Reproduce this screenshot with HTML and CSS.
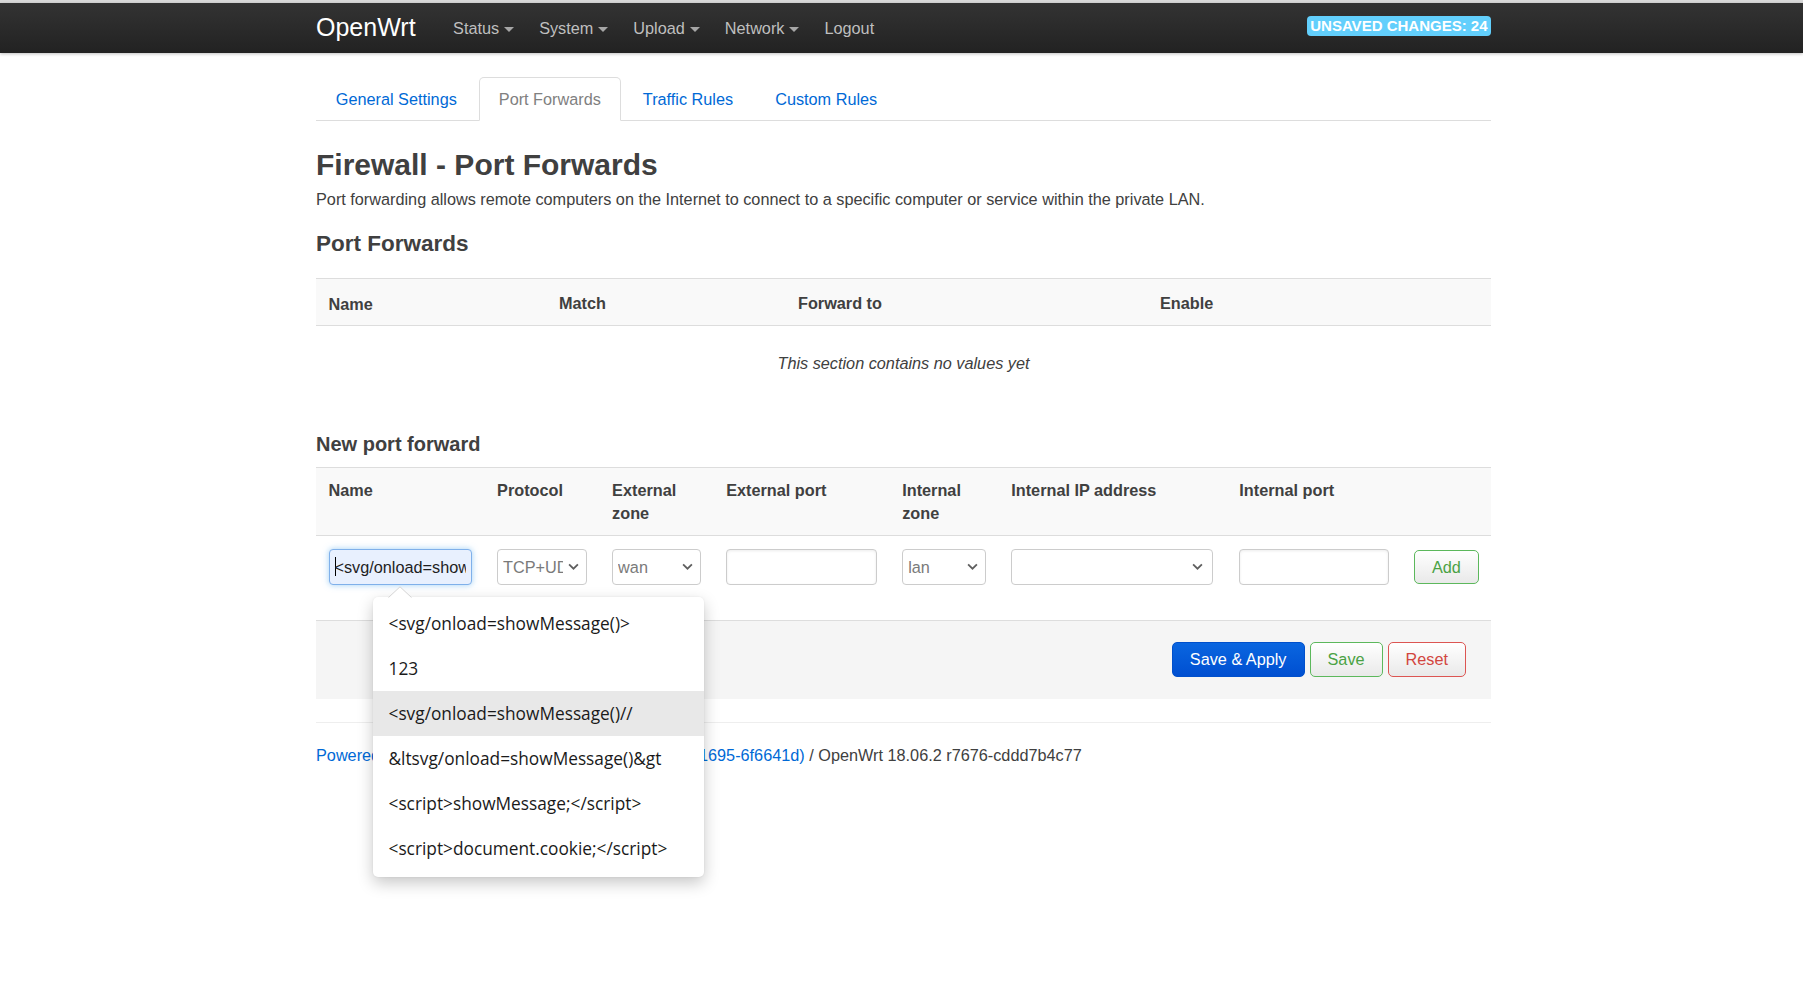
FILE: index.html
```html
<!DOCTYPE html>
<html lang="en">
<head>
<meta charset="utf-8">
<title>OpenWrt - Firewall - Port Forwards - LuCI</title>
<link rel="stylesheet" href="styles.css">
</head>
<body>
<div class="topline"></div>
<header class="topbar">
  <div class="container topbar-inner">
    <a class="brand" href="#">OpenWrt</a>
    <ul class="nav">
      <li><a href="#">Status<span class="caret"></span></a></li>
      <li><a href="#">System<span class="caret"></span></a></li>
      <li><a href="#">Upload<span class="caret"></span></a></li>
      <li><a href="#">Network<span class="caret"></span></a></li>
      <li><a href="#">Logout</a></li>
    </ul>
    <span class="badge">UNSAVED CHANGES: 24</span>
  </div>
</header>

<main class="container main">
  <ul class="tabs">
    <li><a href="#">General Settings</a></li>
    <li class="active"><a href="#">Port Forwards</a></li>
    <li><a href="#">Traffic Rules</a></li>
    <li><a href="#">Custom Rules</a></li>
  </ul>

  <h2 class="page-title">Firewall - Port Forwards</h2>
  <p class="page-desc">Port forwarding allows remote computers on the Internet to connect to a specific computer or service within the private LAN.</p>

  <h3 class="section-title">Port Forwards</h3>
  <table class="table t1">
    <colgroup>
      <col class="c1-name"><col class="c1-match"><col class="c1-fwd"><col class="c1-enable">
    </colgroup>
    <thead>
      <tr><th class="th-name">Name</th><th>Match</th><th>Forward to</th><th>Enable</th></tr>
    </thead>
    <tbody>
      <tr class="placeholder"><td colspan="4"><em>This section contains no values yet</em></td></tr>
    </tbody>
  </table>

  <h4 class="create-title">New port forward</h4>
  <table class="table t2">
    <colgroup>
      <col class="c2-name"><col class="c2-proto"><col class="c2-ezone"><col class="c2-eport"><col class="c2-izone"><col class="c2-iip"><col class="c2-iport"><col class="c2-add">
    </colgroup>
    <thead>
      <tr>
        <th>Name</th><th>Protocol</th><th>External zone</th><th>External port</th><th>Internal zone</th><th>Internal IP address</th><th>Internal port</th><th></th>
      </tr>
    </thead>
    <tbody>
      <tr class="create-row">
        <td>
          <div class="ac-anchor">
            <div class="input input-focus"><span class="text-caret"></span><span class="input-text">&lt;svg/onload=showMessage()//</span></div>
            <div class="ac-popup">
              <svg class="ac-arrow" width="24" height="12" viewBox="0 0 24 12"><path d="M0.5 11.5 L12 0.8 L23.5 11.5" fill="#fff" stroke="#d4d4d4" stroke-width="1"/></svg>
              <ul class="ac-list">
                <li>&lt;svg/onload=showMessage()&gt;</li>
                <li>123</li>
                <li class="hover">&lt;svg/onload=showMessage()//</li>
                <li>&amp;ltsvg/onload=showMessage()&amp;gt</li>
                <li>&lt;script&gt;showMessage;&lt;/script&gt;</li>
                <li>&lt;script&gt;document.cookie;&lt;/script&gt;</li>
              </ul>
            </div>
          </div>
        </td>
        <td><div class="select sel-proto"><span class="sel-text">TCP+UDP</span><svg class="chev" viewBox="0 0 10 6"><path d="M1 1 L5 5 L9 1"/></svg></div></td>
        <td><div class="select sel-wan"><span class="sel-text">wan</span><svg class="chev" viewBox="0 0 10 6"><path d="M1 1 L5 5 L9 1"/></svg></div></td>
        <td><div class="input input-eport"></div></td>
        <td><div class="select sel-lan"><span class="sel-text">lan</span><svg class="chev" viewBox="0 0 10 6"><path d="M1 1 L5 5 L9 1"/></svg></div></td>
        <td><div class="select sel-ip"><span class="sel-text"></span><svg class="chev" viewBox="0 0 10 6"><path d="M1 1 L5 5 L9 1"/></svg></div></td>
        <td><div class="input input-iport"></div></td>
        <td><button class="btn btn-add" type="button">Add</button></td>
      </tr>
    </tbody>
  </table>

  <div class="actions">
    <button class="btn btn-apply" type="button">Save &amp; Apply</button>
    <button class="btn btn-save" type="button">Save</button>
    <button class="btn btn-reset" type="button">Reset</button>
  </div>

  <footer class="footer">
    <a href="#">Powered by LuCI openwrt-18.06 branch (git-19.020.41695-6f6641d)</a> / OpenWrt 18.06.2 r7676-cddd7b4c77
  </footer>
</main>
</body>
</html>
```

FILE: styles.css
```css
* { box-sizing: border-box; }

html, body {
  margin: 0;
  padding: 0;
}

html {
  height: 100%;
}

body {
  min-height: 100%;
  font-family: "Liberation Sans", Arial, Helvetica, sans-serif;
  font-size: 16.25px;
  line-height: 22.5px;
  color: #404040;
  background: #fff;
}

a {
  color: #0069d6;
  text-decoration: none;
}

.container {
  width: 1175px;
  margin-left: calc(50% - 585.5px);
}

/* ---------- top bar ---------- */
.topline {
  height: 3px;
  background: #d9d9d9;
}

.topbar {
  height: 50px;
  background: linear-gradient(#333333, #222222);
  box-shadow: 0 1px 3px rgba(0, 0, 0, 0.25);
  position: relative;
  z-index: 2;
}

.topbar-inner {
  display: flex;
  align-items: flex-start;
  height: 50px;
}

.brand {
  color: #ffffff;
  font-size: 25px;
  line-height: 25px;
  padding: 12px 25px 13px 0;
}

.nav {
  display: flex;
  list-style: none;
  margin: 0;
  padding: 0;
}

.nav a {
  display: flex;
  align-items: center;
  color: #bfbfbf;
  padding: 14px 12.5px 13px;
  line-height: 23px;
}

.nav .caret {
  width: 0;
  height: 0;
  border-left: 5px solid transparent;
  border-right: 5px solid transparent;
  border-top: 5px solid #a6a6a6;
  margin-left: 5px;
  margin-top: 2px;
}

.badge {
  margin-left: auto;
  margin-top: 13px;
  background: #62cffc;
  color: #ffffff;
  font-weight: bold;
  font-size: 15px;
  line-height: 17px;
  padding: 1px 3.5px 2px;
  border-radius: 4px;
  white-space: nowrap;
}

/* ---------- tabs ---------- */
.tabs {
  display: flex;
  list-style: none;
  margin: 24px 0 0;
  padding: 0;
  border-bottom: 1px solid #dddddd;
}

.tabs li {
  margin-bottom: -1px;
}

.tabs a {
  display: block;
  padding: 0 18.75px;
  line-height: 42px;
  margin-right: 2.5px;
  border: 1px solid transparent;
  border-radius: 5px 5px 0 0;
}

.tabs .active a {
  color: #808080;
  background: #ffffff;
  border-color: #dddddd #dddddd transparent;
}

/* ---------- headings ---------- */
.page-title {
  margin: 21px 0 0;
  font-size: 30px;
  line-height: 46px;
  font-weight: bold;
  color: #404040;
}

.page-desc {
  margin: 0;
}

.section-title {
  margin: 16.5px 0 0;
  font-size: 22.5px;
  line-height: 34px;
  font-weight: bold;
}

.create-title {
  margin: 45.5px 0 0;
  font-size: 20px;
  line-height: 25px;
  font-weight: bold;
}

/* ---------- tables ---------- */
.table {
  width: 100%;
  border-collapse: collapse;
  table-layout: fixed;
  border-top: 1px solid #dddddd;
}

.t1 { margin-top: 17px; }
.t2 { margin-top: 10.5px; }

.table th {
  text-align: left;
  vertical-align: top;
  font-weight: bold;
  background: #f9f9f9;
  border-bottom: 1px solid #dddddd;
  padding: 12.5px 12.5px 11.25px;
}

.t1 .th-name {
  padding-top: 14px;
  padding-bottom: 9.75px;
}

.t2 th {
  padding: 11px 12.5px 11px;
}

.c1-name { width: 230.5px; }
.c1-match { width: 239px; }
.c1-fwd { width: 362px; }
.c1-enable { width: 343.5px; }

.c2-name { width: 168.5px; }
.c2-proto { width: 115px; }
.c2-ezone { width: 114px; }
.c2-eport { width: 176px; }
.c2-izone { width: 109px; }
.c2-iip { width: 228px; }
.c2-iport { width: 174.5px; }
.c2-add { width: 89.5px; }

.placeholder td {
  text-align: center;
  padding: 25.5px 12.5px 12px;
}

.placeholder em {
  font-style: italic;
}

.create-row td {
  padding: 12.5px 12.5px 35px;
  vertical-align: top;
}

/* ---------- form controls ---------- */
.input {
  height: 36px;
  border: 1px solid #cccccc;
  border-radius: 4px;
  background: #ffffff;
  box-shadow: inset 0 1px 3px rgba(0, 0, 0, 0.08);
}

.input-focus {
  width: 143px;
  display: flex;
  align-items: center;
  padding: 0 5px;
  white-space: nowrap;
  color: #1e1e1e;
  background: #e8f0fe;
  border-color: #7fb0ea;
  box-shadow: 0 0 6px rgba(82, 168, 236, 0.55);
}

.text-caret {
  flex: none;
  width: 1px;
  height: 19px;
  background: #000000;
  margin-right: -1px;
}

.input-text {
  flex: 1;
  min-width: 0;
  overflow: hidden;
}

.input-eport { width: 151px; }
.input-iport { width: 150px; }

.select {
  display: flex;
  align-items: center;
  height: 36px;
  border: 1px solid #cccccc;
  border-radius: 4px;
  background: #ffffff;
  color: #7a7a7a;
  padding-left: 5px;
}

.sel-text {
  flex: 1;
  min-width: 0;
  overflow: hidden;
  white-space: nowrap;
}

.chev {
  flex: none;
  width: 11px;
  height: 7px;
  margin: 0 7px 0 5px;
  fill: none;
  stroke: #5f5f5f;
  stroke-width: 1.6;
}

.sel-proto { width: 90px; }
.sel-wan { width: 89px; }
.sel-lan { width: 84px; }
.sel-ip { width: 202px; }
.sel-ip .chev { margin-right: 9px; }

/* ---------- buttons ---------- */
.btn {
  font-family: inherit;
  font-size: 16.25px;
  line-height: 22px;
  padding: 5.5px 17px;
  border: 1px solid #cccccc;
  border-radius: 5px;
  background: linear-gradient(#ffffff, #e9e9e9);
  cursor: pointer;
}

.btn-add {
  margin-top: 1.5px;
  padding: 5px 17px;
  width: 65px;
  color: #4aa244;
  border-color: #5cb85c;
}

.btn-apply {
  color: #ffffff;
  background: linear-gradient(#0a66e0, #004fd1);
  border-color: #0050cc;
}

.btn-save {
  color: #4aa244;
  border-color: #5cb85c;
}

.btn-reset {
  color: #d24640;
  border-color: #dc5552;
}

.actions {
  display: flex;
  justify-content: flex-end;
  gap: 5px;
  background: #f5f5f5;
  border-top: 1px solid #dddddd;
  padding: 21px 25px 22.5px;
}

/* ---------- footer ---------- */
.footer {
  margin-top: 22.5px;
  border-top: 1px solid #eeeeee;
  padding-top: 21px;
}

/* ---------- autocomplete popup ---------- */
.ac-anchor {
  position: relative;
}

.ac-popup {
  position: absolute;
  left: 44px;
  top: 48px;
  width: 331px;
  z-index: 10;
  background: #ffffff;
  border-radius: 5px;
  box-shadow: 0 6px 16px rgba(0, 0, 0, 0.22), 0 0 2px rgba(0, 0, 0, 0.08);
  padding: 4px 0 6px;
}

.ac-arrow {
  position: absolute;
  left: 15px;
  top: -11px;
  display: block;
}

.ac-list {
  list-style: none;
  margin: 0;
  padding: 0;
  font-family: "Open Sans", "Noto Sans", sans-serif;
  font-size: 17.3px;
  color: #1a1a1a;
}

.ac-list li {
  height: 45px;
  line-height: 45px;
  padding-left: 16px;
  white-space: nowrap;
}

.ac-list li.hover {
  background: #e8e8e8;
}
```
